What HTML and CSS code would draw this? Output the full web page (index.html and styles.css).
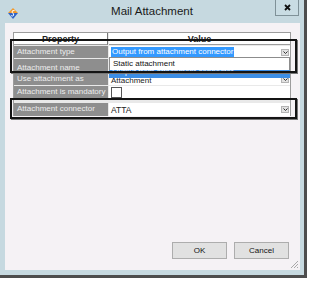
FILE: index.html
```html
<!DOCTYPE html>
<html lang="en">
<head>
    <meta charset="UTF-8">
    <title>Mail Attachment</title>
    <link rel="stylesheet" href="styles.css">
</head>
<body>
    <div class="window">
        <div class="titlebar">
            <svg class="app-icon" width="10" height="11" viewBox="0 0 10 11">
                <polygon points="5,0 10,5 5,5 0,5" fill="#f39a2b"/>
                <polygon points="0,5 5,5 10,5 5,11" fill="#2f64c8"/>
                <path d="M6.5 2.5 Q3.5 2 4 4.5 Q6.5 5.5 5.5 7.5 Q4.5 8.5 3.2 7.6" fill="none" stroke="#fff" stroke-width="1"/>
            </svg>
            <span class="title">Mail Attachment</span>
            <div class="close">
                <svg width="7" height="7" viewBox="0 0 7 7">
                    <path d="M1 1 L6 6 M6 1 L1 6" stroke="#111" stroke-width="1.8"/>
                </svg>
            </div>
        </div>

        <div class="client">
            <div class="props">
                <div class="head">Property</div>
                <div class="head">Value</div>

                <div class="label r1">Attachment type</div>
                <div class="value r1">
                    <span class="selected">Output from attachment connector</span>
                    <span class="drop"><svg width="5" height="3" viewBox="0 0 5 3"><path d="M0.5 0.5 L2.5 2.5 L4.5 0.5" fill="none" stroke="#333" stroke-width="1"/></svg></span>
                </div>

                <div class="label r2">Attachment name</div>
                <div class="value r2"></div>

                <div class="label r3">Use attachment as</div>
                <div class="value r3">
                    <span>Attachment</span>
                    <span class="drop"><svg width="5" height="3" viewBox="0 0 5 3"><path d="M0.5 0.5 L2.5 2.5 L4.5 0.5" fill="none" stroke="#333" stroke-width="1"/></svg></span>
                </div>

                <div class="label r4">Attachment is mandatory</div>
                <div class="value r4"><span class="checkbox"></span></div>

                <div class="label r5">Attachment connector</div>
                <div class="value r5">
                    <span class="plain">ATTA</span>
                    <span class="drop"><svg width="5" height="3" viewBox="0 0 5 3"><path d="M0.5 0.5 L2.5 2.5 L4.5 0.5" fill="none" stroke="#333" stroke-width="1"/></svg></span>
                </div>
            </div>

            <!-- open combo list of the first row -->
            <div class="droplist">
                <div class="item">Static attachment</div>
                <div class="item hot">Output from attachment connector</div>
            </div>

            <!-- annotation frames -->
            <div class="mark mark-top"></div>
            <div class="mark mark-bottom"></div>

            <div class="buttons">
                <button class="btn">OK</button>
                <button class="btn">Cancel</button>
            </div>

            <svg class="grip" width="9" height="8" viewBox="0 0 9 8">
                <path d="M8 1 L1 8 M8 4 L4 8 M8 7 L7 8" stroke="#a9a9a9" stroke-width="1"/>
            </svg>
        </div>
    </div>
</body>
</html>
```

FILE: styles.css
```css
body {
    margin: 0;
    background: #fff;
    font-family: "Liberation Sans", Arial, sans-serif;
}
.window {
    width: 304px;
    height: 275px;
    background: #c6d9e0;
    border-right: 3px solid #4d4d4d;
    border-bottom: 3px solid #4d4d4d;
    display: flex;
    flex-direction: column;
}
.titlebar {
    height: 23px;
    position: relative;
    display: flex;
    align-items: flex-start;
}
.app-icon {
    margin: 8px 0 0 8px;
}
.title {
    position: absolute;
    left: 0;
    right: 0;
    top: 5px;
    text-align: center;
    font-size: 11.5px;
    color: #1a1a1a;
}
.close {
    position: absolute;
    left: 275px;
    top: 0;
    width: 24px;
    height: 16px;
    box-sizing: border-box;
    border: 1px solid #7f9198;
    border-top: none;
    background: #c9dce3;
    display: flex;
    align-items: center;
    justify-content: center;
}
.client {
    position: relative;
    margin: 0 4px 5px 5px;
    flex: 1;
    background: #f5f2f5;
    display: flex;
    flex-direction: column;
}
.props {
    margin: 9px 0 0 8px;
    width: 278px;
    box-sizing: border-box;
    border: 1px solid #9c9c9c;
    border-bottom: none;
    background: #e9e9e9;
    display: grid;
    grid-template-columns: 94px 181px;
    column-gap: 1px;
    row-gap: 1px;
    font-size: 8px;
}
.head {
    height: 11px;
    line-height: 13px;
    background: #fff;
    text-align: center;
    font-weight: bold;
    font-size: 9px;
    color: #222;
    border-bottom: 1px solid #9c9c9c;
}
.head:first-child {
    border-right: 1px solid #777;
}
.label {
    background: #8e8e8e;
    color: #ececec;
    padding-left: 3px;
    line-height: 12px;
    white-space: nowrap;
    overflow: hidden;
}
.value {
    background: #fff;
    color: #222;
    display: flex;
    align-items: center;
    justify-content: space-between;
    padding: 0 1px 0 2px;
}
.r1 { height: 12px; }
.r2 { height: 13px; line-height: 17px; }
.r3 { height: 12px; }
.r3 span:first-child { margin-top: 3px; }
.r4 { height: 12px; }
.r5 { height: 13px; margin-top: 4px; }
.selected {
    background: #3399ff;
    color: #fff;
    line-height: 10px;
    padding: 0 1px;
}
.plain {
    font-size: 8.5px;
}
.drop {
    width: 8px;
    height: 7px;
    box-sizing: border-box;
    background: #e2e2e2;
    border: 1px solid #b4b4b4;
    display: flex;
    align-items: center;
    justify-content: center;
}
.checkbox {
    width: 9px;
    height: 9px;
    border: 1px solid #555;
    background: #fff;
}
.droplist {
    position: absolute;
    left: 104px;
    top: 34px;
    width: 181px;
    font-size: 8px;
}
.item {
    height: 12px;
    line-height: 12px;
    padding-left: 3px;
    background: #fff;
    border: 1px solid #8c8c8c;
    border-bottom: none;
    color: #111;
}
.item.hot {
    height: 8px;
    line-height: 4px;
    overflow: hidden;
    border: none;
    background: #3c8ee6;
    color: #fff;
}
.mark {
    position: absolute;
    left: 5px;
    width: 287px;
    box-sizing: border-box;
    border: 2px solid #141414;
    box-shadow: 1px 1px 0 #777;
}
.mark-top {
    top: 16px;
    height: 34px;
}
.mark-bottom {
    top: 75px;
    height: 21px;
}
.buttons {
    margin-top: auto;
    display: flex;
    justify-content: flex-end;
    gap: 7px;
    padding: 0 11px 11px 0;
}
.btn {
    width: 55px;
    height: 17px;
    padding: 0;
    background: #e1e1e1;
    border: 1px solid #adadad;
    border-radius: 0;
    font-family: "Liberation Sans", Arial, sans-serif;
    font-size: 8px;
    color: #111;
}
.grip {
    position: absolute;
    right: 1px;
    bottom: 2px;
}
```
